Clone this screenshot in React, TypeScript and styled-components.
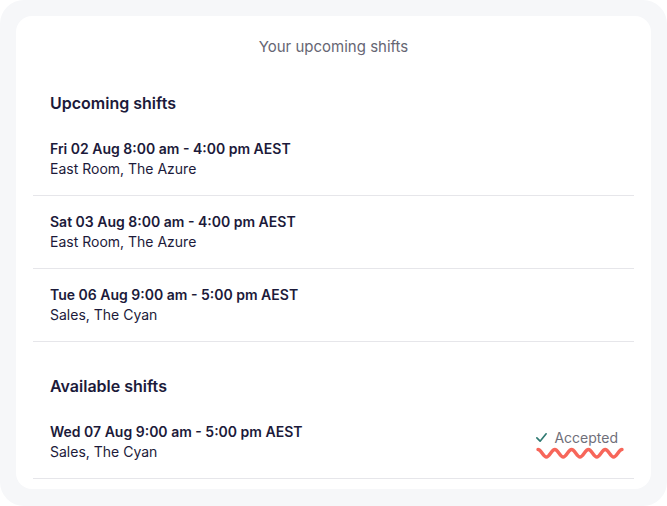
import styled, { createGlobalStyle } from 'styled-components';

const GlobalStyle = createGlobalStyle`
  html, body {
    margin: 0;
    padding: 0;
    background: #ffffff;
  }
  body {
    font-family: Inter, "Noto Sans", sans-serif;
    -webkit-font-smoothing: antialiased;
  }
`;

interface Shift {
  time: string;
  place: string;
  accepted?: boolean;
}

const upcoming: Shift[] = [
  { time: 'Fri 02 Aug 8:00 am - 4:00 pm AEST', place: 'East Room, The Azure' },
  { time: 'Sat 03 Aug 8:00 am - 4:00 pm AEST', place: 'East Room, The Azure' },
  { time: 'Tue 06 Aug 9:00 am - 5:00 pm AEST', place: 'Sales, The Cyan' },
];

const available: Shift[] = [
  {
    time: 'Wed 07 Aug 9:00 am - 5:00 pm AEST',
    place: 'Sales, The Cyan',
    accepted: true,
  },
];

// sine-ish wave: crest -> trough alternating, 10 half periods
const wavePath = (() => {
  const h = 8.4;
  const top = 2.5;
  const bottom = 10;
  let x = 2;
  let y = top;
  let d = `M${x} ${y}`;
  for (let i = 0; i < 10; i++) {
    const ny = y === top ? bottom : top;
    d += ` C${x + h * 0.38} ${y} ${x + h * 0.62} ${ny} ${x + h} ${ny}`;
    x += h;
    y = ny;
  }
  return d;
})();

const Squiggle = () => (
  <svg width="88" height="13" viewBox="0 0 88 13" fill="none">
    <path
      d={wavePath}
      stroke="#f7665a"
      strokeWidth="3.4"
      strokeLinecap="round"
      fill="none"
    />
  </svg>
);

const Check = () => (
  <svg width="13" height="13" viewBox="0 0 14 14" fill="none">
    <path
      d="M2 7.5 L5.5 11 L12 3"
      stroke="#2f7a72"
      strokeWidth="1.8"
      strokeLinecap="round"
      strokeLinejoin="round"
    />
  </svg>
);

const ShiftRow = ({ shift }: { shift: Shift }) => (
  <Row>
    <Info>
      <Time>{shift.time}</Time>
      <Place>{shift.place}</Place>
    </Info>
    {shift.accepted && (
      <Status>
        <StatusLabel>
          <Check />
          Accepted
        </StatusLabel>
        <Squiggle />
      </Status>
    )}
  </Row>
);

export default function App() {
  return (
    <>
      <GlobalStyle />
      <Frame>
        <Card>
          <Title>Your upcoming shifts</Title>
          <Section>
            <Heading>Upcoming shifts</Heading>
            {upcoming.map((s, i) => (
              <ShiftRow key={i} shift={s} />
            ))}
          </Section>
          <Section>
            <Heading>Available shifts</Heading>
            {available.map((s, i) => (
              <ShiftRow key={i} shift={s} />
            ))}
          </Section>
        </Card>
      </Frame>
    </>
  );
}

const Frame = styled.div`
  box-sizing: border-box;
  width: 667px;
  height: 506px;
  padding: 16px 16px 17px;
  background: #f6f7f9;
  border-radius: 24px;
`;

const Card = styled.div`
  box-sizing: border-box;
  height: 100%;
  background: #ffffff;
  border-radius: 16px;
  padding: 21px 17px 0;
`;

const Title = styled.div`
  text-align: center;
  font-size: 15px;
  line-height: 20px;
  color: #666673;
  margin-bottom: 2px;
`;

const Section = styled.div`
  padding-top: 32px;
`;

const Heading = styled.div`
  padding: 0 17px;
  font-size: 16px;
  line-height: 24px;
  font-weight: 600;
  color: #1c1a3a;
  margin-bottom: 8px;
`;

const Row = styled.div`
  display: flex;
  align-items: center;
  justify-content: space-between;
  padding: 16px 10px 16px 17px;
  border-bottom: 1px solid #e6e6ea;
`;

const Info = styled.div`
  display: flex;
  flex-direction: column;
`;

const Time = styled.div`
  font-size: 14px;
  line-height: 20px;
  font-weight: 600;
  color: #1c1a3a;
`;

const Place = styled.div`
  font-size: 14px;
  line-height: 20px;
  color: #1c1a3a;
`;

const Status = styled.div`
  display: flex;
  flex-direction: column;
  align-items: flex-end;
  gap: 0;
  padding-top: 4px;
`;

const StatusLabel = styled.div`
  display: flex;
  align-items: center;
  gap: 6px;
  margin-right: 6px;
  font-size: 14px;
  line-height: 18px;
  color: #6f6f7a;
`;
